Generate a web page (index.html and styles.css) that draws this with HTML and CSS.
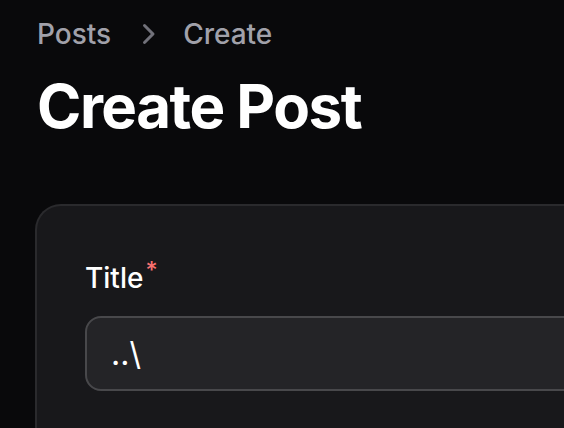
FILE: index.html
```html
<!DOCTYPE html>
<html lang="en">
<head>
<meta charset="utf-8">
<title>Create Post</title>
<link rel="stylesheet" href="styles.css">
</head>
<body>
<main class="page">
  <nav class="breadcrumbs">
    <a class="crumb" href="#">Posts</a>
    <svg class="chev" viewBox="0 0 20 20" width="40" height="40" aria-hidden="true"><path fill-rule="evenodd" d="M8.22 5.22a.75.75 0 0 1 1.06 0l4.25 4.25a.75.75 0 0 1 0 1.06l-4.25 4.25a.75.75 0 0 1-1.06-1.06L11.94 10 8.22 6.28a.75.75 0 0 1 0-1.06Z"/></svg>
    <span class="crumb">Create</span>
  </nav>
  <h1 class="heading">Create Post</h1>
  <section class="card">
    <div class="field">
      <label class="label">Title<sup class="req">*</sup></label>
      <div class="input-wrap"><span class="input-text">..\</span></div>
    </div>
  </section>
</main>
</body>
</html>
```
FILE: styles.css
```css
html, body {
  margin: 0;
  padding: 0;
  background: #09090b;
  overflow: hidden;
  height: 428px;
}
body {
  font-family: Inter, "Noto Sans", sans-serif;
  color: #ffffff;
}
.page {
  width: 900px;
  padding: 14px 0 0 37px;
  box-sizing: border-box;
}
.breadcrumbs {
  display: flex;
  align-items: center;
  gap: 16px;
  height: 40px;
}
.crumb {
  font-size: 28px;
  line-height: 40px;
  font-weight: 500;
  color: #a1a1aa;
  text-decoration: none;
}
.chev {
  fill: #71717a;
  display: block;
}
.heading {
  margin: 16px 0 0 0;
  font-size: 60px;
  line-height: 72px;
  font-weight: 700;
  letter-spacing: -0.025em;
  color: #ffffff;
}
.card {
  margin-top: 64px;
  background: #18181b;
  border-radius: 24px;
  box-shadow: 0 0 0 2px #2a2a2d;
  padding: 44px 48px 48px 48px;
  height: 400px;
  box-sizing: border-box;
}
.field {
  display: flex;
  flex-direction: column;
  gap: 18px;
}
.label {
  font-size: 28px;
  line-height: 40px;
  font-weight: 500;
  color: #ffffff;
}
.req {
  color: #f87171;
  font-weight: 500;
  margin-left: 2px;
}
.input-wrap {
  height: 75px;
  box-sizing: border-box;
  border: 2px solid #48484b;
  border-radius: 16px;
  background: #242427;
  display: flex;
  align-items: center;
  padding: 0 24px;
}
.input-text {
  font-size: 32px;
  line-height: 48px;
  color: #ffffff;
}
```
